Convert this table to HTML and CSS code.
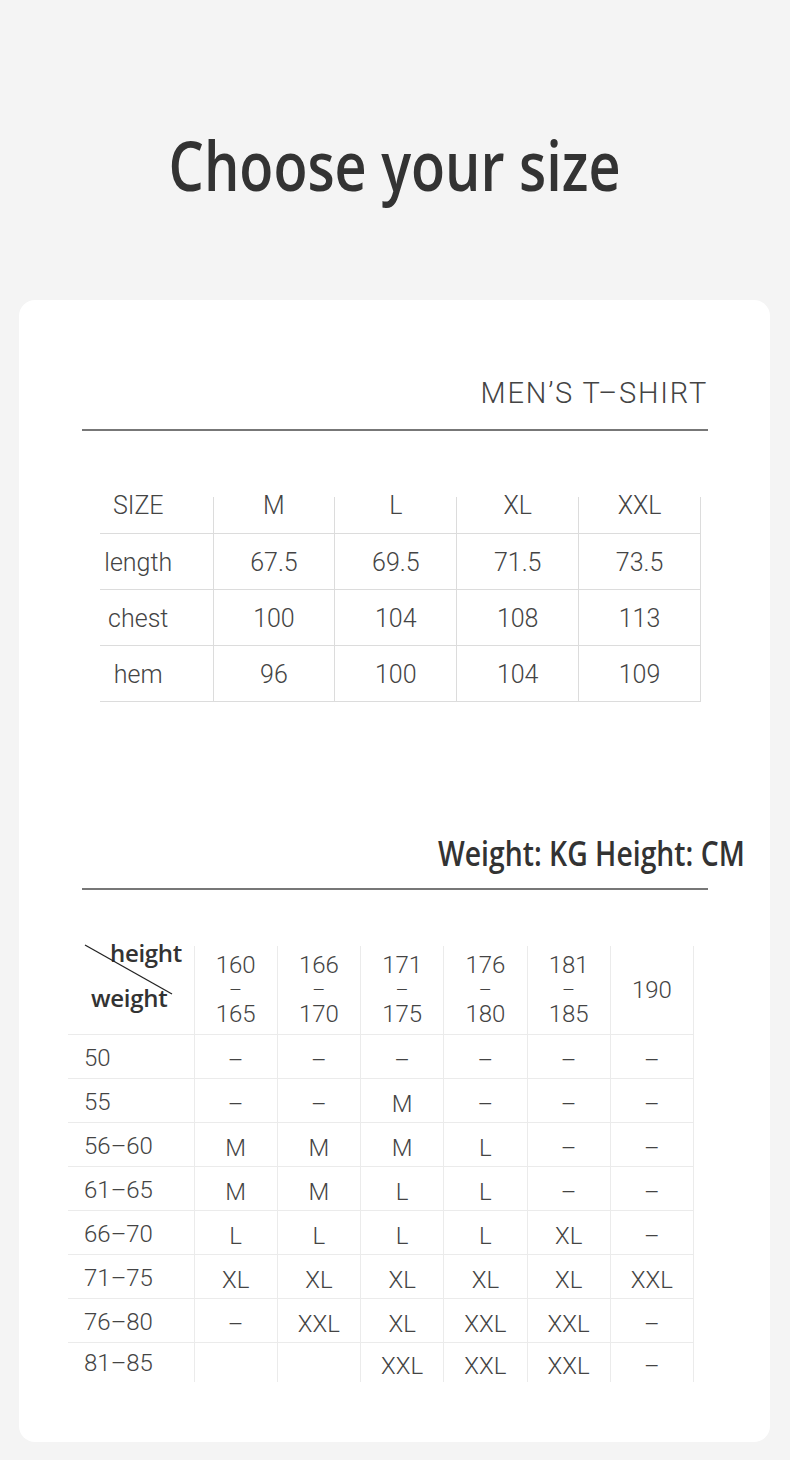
FILE: index.html
```html
<!DOCTYPE html>
<html lang="en">
<head>
<meta charset="utf-8">
<title>Choose your size</title>
<link rel="stylesheet" href="styles.css">
</head>
<body>
<div class="page">
  <header class="page-head">
    <h1 class="title"><span class="squeeze">Choose your size</span></h1>
  </header>
  <main class="card">
    <section class="block">
      <h2 class="label-light">MEN’S T–SHIRT</h2>
      <div class="rule"></div>
      <table class="size-table">
        <colgroup><col class="col-label"><col><col><col><col></colgroup>
        <thead>
          <tr><th class="cell-label">SIZE</th><th>M</th><th>L</th><th>XL</th><th>XXL</th></tr>
        </thead>
        <tbody>
          <tr><td class="cell-label">length</td><td>67.5</td><td>69.5</td><td>71.5</td><td>73.5</td></tr>
          <tr><td class="cell-label">chest</td><td>100</td><td>104</td><td>108</td><td>113</td></tr>
          <tr><td class="cell-label">hem</td><td>96</td><td>100</td><td>104</td><td>109</td></tr>
        </tbody>
      </table>
    </section>
    <section class="block">
      <h2 class="label-bold"><span class="squeeze-right">Weight: KG Height: CM</span></h2>
      <div class="rule rule-fit"></div>
      <table class="fit-table">
        <colgroup><col class="col-weight"><col><col><col><col><col><col></colgroup>
        <thead>
          <tr>
            <th class="diag-cell">
              <div class="diag">
                <svg class="diag-line" width="126" height="89" viewBox="0 0 126 89"><line x1="17" y1="4" x2="104" y2="53" stroke="#222" stroke-width="1.3"/></svg>
                <span class="diag-top">height</span>
                <span class="diag-bottom">weight</span>
              </div>
            </th>
            <th><span class="range">160<span class="range-dash">–</span>165</span></th>
            <th><span class="range">166<span class="range-dash">–</span>170</span></th>
            <th><span class="range">171<span class="range-dash">–</span>175</span></th>
            <th><span class="range">176<span class="range-dash">–</span>180</span></th>
            <th><span class="range">181<span class="range-dash">–</span>185</span></th>
            <th>190</th>
          </tr>
        </thead>
        <tbody>
          <tr><td class="cell-weight">50</td><td>–</td><td>–</td><td>–</td><td>–</td><td>–</td><td>–</td></tr>
          <tr><td class="cell-weight">55</td><td>–</td><td>–</td><td>M</td><td>–</td><td>–</td><td>–</td></tr>
          <tr><td class="cell-weight">56–60</td><td>M</td><td>M</td><td>M</td><td>L</td><td>–</td><td>–</td></tr>
          <tr><td class="cell-weight">61–65</td><td>M</td><td>M</td><td>L</td><td>L</td><td>–</td><td>–</td></tr>
          <tr><td class="cell-weight">66–70</td><td>L</td><td>L</td><td>L</td><td>L</td><td>XL</td><td>–</td></tr>
          <tr><td class="cell-weight">71–75</td><td>XL</td><td>XL</td><td>XL</td><td>XL</td><td>XL</td><td>XXL</td></tr>
          <tr><td class="cell-weight">76–80</td><td>–</td><td>XXL</td><td>XL</td><td>XXL</td><td>XXL</td><td>–</td></tr>
          <tr><td class="cell-weight">81–85</td><td></td><td></td><td>XXL</td><td>XXL</td><td>XXL</td><td>–</td></tr>
        </tbody>
      </table>
    </section>
  </main>
</div>
</body>
</html>
```

FILE: styles.css
```css
* { box-sizing: border-box; }

body {
  margin: 0;
  background: #f4f4f4;
  font-family: Roboto, "Liberation Sans", sans-serif;
  color: #444;
}

.page {
  width: 790px;
  padding-bottom: 20px;
}

.page-head {
  height: 300px;
  padding-top: 131px;
  text-align: center;
}

.title {
  margin: 0;
  font: 600 68px/1 "Open Sans", "Noto Sans", sans-serif;
  color: #333;
}

.squeeze {
  display: inline-block;
  transform: scaleX(0.82);
}

.card {
  margin: 0 20px 0 19px;
  background: #fff;
  border-radius: 16px;
  padding: 79px 0 60px;
}

.label-light {
  margin: 0;
  text-align: right;
  padding-right: 62px;
  font: 300 29px/1 Roboto, "Liberation Sans", sans-serif;
  letter-spacing: 1.8px;
  color: #444;
}

.rule {
  margin: 21px 0 0 63px;
  width: 626px;
  height: 2px;
  background: #777;
}

.size-table {
  margin: 66px 0 0 81px;
  width: 601px;
  border-collapse: collapse;
  table-layout: fixed;
  font: 300 25px Roboto, "Liberation Sans", sans-serif;
  color: #444;
}

.size-table .col-label { width: 113px; }

.size-table th,
.size-table td {
  padding: 0;
  text-align: center;
  border-right: 1px solid #dcdcdc;
  border-bottom: 1px solid #dcdcdc;
}

.size-table th {
  font-weight: 300;
  height: 36px;
  line-height: 18px;
  vertical-align: top;
}

.size-table td {
  height: 56px;
  line-height: 25px;
  padding-top: 2px;
  vertical-align: middle;
}

.size-table .cell-label { padding-right: 36px; }

.label-bold {
  margin: 133px 0 0;
  text-align: right;
  padding-right: 25px;
  font: 600 35px/1 "Open Sans", "Noto Sans", sans-serif;
  color: #333;
}

.squeeze-right {
  display: inline-block;
  transform: scaleX(0.81);
  transform-origin: right center;
}

.rule-fit { margin-top: 18px; }

.fit-table {
  margin: 56px 0 0 49px;
  width: 626px;
  border-collapse: collapse;
  table-layout: fixed;
  font: 300 24px Roboto, "Liberation Sans", sans-serif;
  color: #444;
}

.fit-table .col-weight { width: 126px; }

.fit-table th,
.fit-table td {
  padding: 0;
  text-align: center;
  border-right: 1px solid #ebebeb;
  border-bottom: 1px solid #ebebeb;
}

.fit-table th {
  font-weight: 300;
  height: 89px;
  vertical-align: middle;
  line-height: 24.5px;
}

.fit-table td {
  height: 44px;
  line-height: 24px;
  padding-top: 7px;
  vertical-align: middle;
}

.fit-table tbody tr:last-child td {
  border-bottom: none;
  height: 39px;
}

.fit-table .cell-weight {
  text-align: left;
  padding-left: 16px;
  padding-top: 2px;
}

.range {
  display: flex;
  flex-direction: column;
  align-items: center;
}

.range-dash {
  font-size: 20px;
}

.fit-table .diag-cell {
  vertical-align: top;
  text-align: left;
}

.diag {
  position: relative;
  height: 89px;
  font: 600 24px/24px "Open Sans", "Noto Sans", sans-serif;
  color: #333;
  letter-spacing: -0.3px;
}

.diag-line {
  position: absolute;
  left: 0;
  top: 0;
}

.diag-top {
  display: block;
  margin-top: -5px;
  padding-left: 42px;
}

.diag-bottom {
  display: block;
  margin-top: 21px;
  padding-left: 23px;
}
```
